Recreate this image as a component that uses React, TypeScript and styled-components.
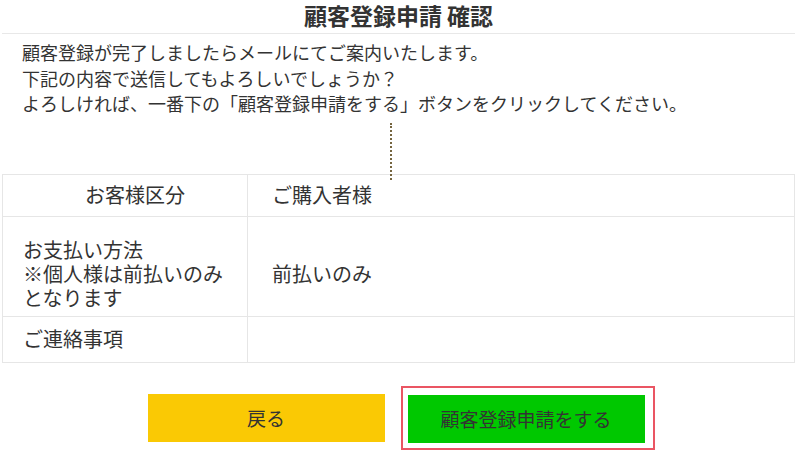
import React from 'react';
import styled, { createGlobalStyle } from 'styled-components';

const GlobalStyle = createGlobalStyle`
  html, body {
    margin: 0;
    padding: 0;
    background: #fff;
  }
  body {
    font-family: "Noto Sans CJK JP", "Noto Sans", sans-serif;
    color: #333;
  }
`;

const Page = styled.main`
  width: 793px;
  margin-left: 2px;
`;

const PageTitle = styled.h1`
  margin: 0;
  height: 33px;
  line-height: 31px;
  font-size: 23px;
  font-weight: 700;
  text-align: center;
  color: #333;
  border-bottom: 1px solid #e8e8e8;
`;

const Intro = styled.p`
  margin: 6px 0 0;
  padding-left: 20px;
  font-size: 18px;
  line-height: 25.5px;
`;

const Connector = styled.div`
  position: relative;
  height: 57px;

  &::after {
    content: '';
    position: absolute;
    left: 388px;
    top: 6px;
    height: 57px;
    border-left: 2px dotted #75653f;
    z-index: 1;
  }
`;

const ConfirmTable = styled.table`
  width: 100%;
  border-collapse: collapse;
  font-size: 20px;
  line-height: 24px;

  th, td {
    border: 1px solid #e6e6e6;
    vertical-align: middle;
  }
`;

const Label = styled.th<{ $center?: boolean }>`
  width: 224px;
  padding: 0 0 0 20px;
  font-weight: 400;
  text-align: ${(p) => (p.$center ? 'center' : 'left')};
`;

const Value = styled.td`
  padding: 0 0 0 24px;
`;

const Row = styled.tr<{ $h: number; $shift?: number }>`
  height: ${(p) => p.$h}px;

  & > th,
  & > td {
    padding-top: ${(p) => p.$shift ?? 0}px;
  }
`;

const Actions = styled.div`
  display: flex;
  justify-content: center;
  align-items: center;
  gap: 16px;
  margin-top: 23px;
  padding-left: 5px;
`;

const Focus = styled.div`
  border: 2px solid #ea5563;
  padding: 7px 8px 5px 5px;
`;

const Button = styled.button<{ $tone: 'back' | 'submit' }>`
  width: 237px;
  height: 48px;
  border: none;
  padding: 0;
  font-family: inherit;
  font-size: 19px;
  color: #333;
  cursor: pointer;
  background: ${(p) => (p.$tone === 'back' ? '#fac904' : '#00c800')};
`;

export default function App() {
  return (
    <>
      <GlobalStyle />
      <Page>
        <PageTitle>顧客登録申請 確認</PageTitle>
        <Intro>
          顧客登録が完了しましたらメールにてご案内いたします。
          <br />
          下記の内容で送信してもよろしいでしょうか？
          <br />
          よろしければ、一番下の「顧客登録申請をする」ボタンをクリックしてください。
        </Intro>
        <Connector />
        <ConfirmTable>
          <tbody>
            <Row $h={42}>
              <Label $center>お客様区分</Label>
              <Value>ご購入者様</Value>
            </Row>
            <Row $h={100} $shift={16}>
              <Label>
                お支払い方法
                <br />
                ※個人様は前払いのみ
                <br />
                となります
              </Label>
              <Value>前払いのみ</Value>
            </Row>
            <Row $h={46}>
              <Label>ご連絡事項</Label>
              <Value />
            </Row>
          </tbody>
        </ConfirmTable>
        <Actions>
          <Button $tone="back">戻る</Button>
          <Focus>
            <Button $tone="submit">顧客登録申請をする</Button>
          </Focus>
        </Actions>
      </Page>
    </>
  );
}
